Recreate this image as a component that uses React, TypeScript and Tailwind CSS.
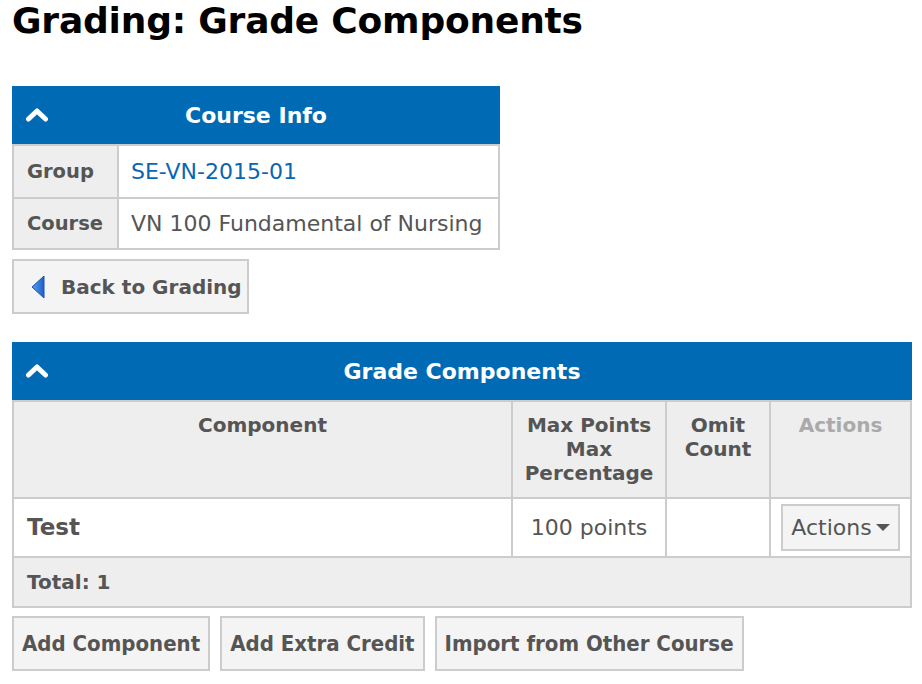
import React from "react";

const Chevron = () => (
  <svg width="22" height="14" viewBox="0 0 22 14" className="absolute left-[14px] top-1/2 -translate-y-1/2">
    <path d="M2.5 11 L11 3 L19.5 11" fill="none" stroke="white" strokeWidth="5" strokeLinecap="round" strokeLinejoin="round" />
  </svg>
);

const PanelHeader = ({ title }: { title: string }) => (
  <div className="relative h-[58px] bg-[#006bb4] flex items-center justify-center text-white font-bold text-[22px]">
    <Chevron />
    <span>{title}</span>
  </div>
);

export default function App() {
  return (
    <div className="bg-white min-h-[684px] px-[12px] text-[#555] font-['DejaVu_Sans','Verdana',sans-serif]">
      <h1 className="text-[36px] font-bold text-black leading-[42px] pt-0 tracking-[-0.2px]">Grading: Grade Components</h1>

      <div className="mt-[44px] w-[488px]">
        <PanelHeader title="Course Info" />
        <table className="w-full border-collapse">
          <tbody>
            <tr className="h-[53px]">
              <td className="w-[105px] bg-[#eee] border-2 border-[#ccc] pl-[13px] font-bold text-[19.5px]">Group</td>
              <td className="bg-white border-2 border-[#ccc] pl-[12px] text-[22px] text-[#0b66b1]">SE-VN-2015-01</td>
            </tr>
            <tr className="h-[51px]">
              <td className="bg-[#eee] border-2 border-[#ccc] pl-[13px] font-bold text-[19.5px]">Course</td>
              <td className="bg-white border-2 border-[#ccc] pl-[12px] text-[22px] whitespace-nowrap">VN 100 Fundamental of Nursing</td>
            </tr>
          </tbody>
        </table>
      </div>

      <button className="mt-[9px] h-[55px] w-[237px] bg-[#f4f4f4] border-2 border-[#ccc] flex items-center pl-[16px] gap-[15px] font-bold text-[20px] text-[#555]">
        <svg width="16" height="24" viewBox="0 0 16 24">
          <defs>
            <linearGradient id="tri" x1="0" y1="0" x2="1" y2="0">
              <stop offset="0" stopColor="#5b9ef0" />
              <stop offset="1" stopColor="#1f5fc8" />
            </linearGradient>
          </defs>
          <path d="M14 1 L2 12 L14 23 Z" fill="url(#tri)" stroke="#1d4fa8" strokeWidth="1" strokeLinejoin="round" />
        </svg>
        <span>Back to Grading</span>
      </button>

      <div className="mt-[28px] w-[900px]">
        <PanelHeader title="Grade Components" />
        <table className="w-full border-collapse">
          <thead>
            <tr className="h-[97px] bg-[#eee] align-top">
              <th className="border-2 border-[#ccc] w-[499px] pt-[11px] text-[20px] font-bold leading-[24px]">Component</th>
              <th className="border-2 border-[#ccc] w-[154px] pt-[11px] text-[20px] font-bold leading-[24px]">Max Points<br />Max<br />Percentage</th>
              <th className="border-2 border-[#ccc] w-[104px] pt-[11px] text-[20px] font-bold leading-[24px]">Omit<br />Count</th>
              <th className="border-2 border-[#ccc] pt-[11px] text-[20px] font-bold leading-[24px] text-[#aaa]">Actions</th>
            </tr>
          </thead>
          <tbody>
            <tr className="h-[59px] bg-white">
              <td className="border-2 border-[#ccc] pl-[13px] font-bold text-[23px]">Test</td>
              <td className="border-2 border-[#ccc] text-center text-[22px]">100 points</td>
              <td className="border-2 border-[#ccc]"></td>
              <td className="border-2 border-[#ccc] px-[10px]">
                <div className="h-[47px] bg-[#f4f4f4] border-2 border-[#ccc] flex items-center justify-center gap-[4px] text-[22px] text-[#555]">
                  <span>Actions</span>
                  <svg width="14" height="8" viewBox="0 0 14 8"><path d="M0 0 L14 0 L7 7 Z" fill="#555" /></svg>
                </div>
              </td>
            </tr>
            <tr className="h-[50px] bg-[#eee]">
              <td colSpan={4} className="border-2 border-[#ccc] pl-[13px] font-bold text-[20px]">Total: 1</td>
            </tr>
          </tbody>
        </table>
      </div>

      <div className="mt-[8px] flex gap-[10px]">
        {["Add Component", "Add Extra Credit", "Import from Other Course"].map((t) => (
          <button key={t} className="h-[55px] px-[8px] bg-[#f4f4f4] border-2 border-[#ccc] font-bold text-[22px] text-[#555] [font-stretch:condensed] font-['DejaVu_Sans_Condensed','DejaVu_Sans',sans-serif]">
            {t}
          </button>
        ))}
      </div>
    </div>
  );
}
